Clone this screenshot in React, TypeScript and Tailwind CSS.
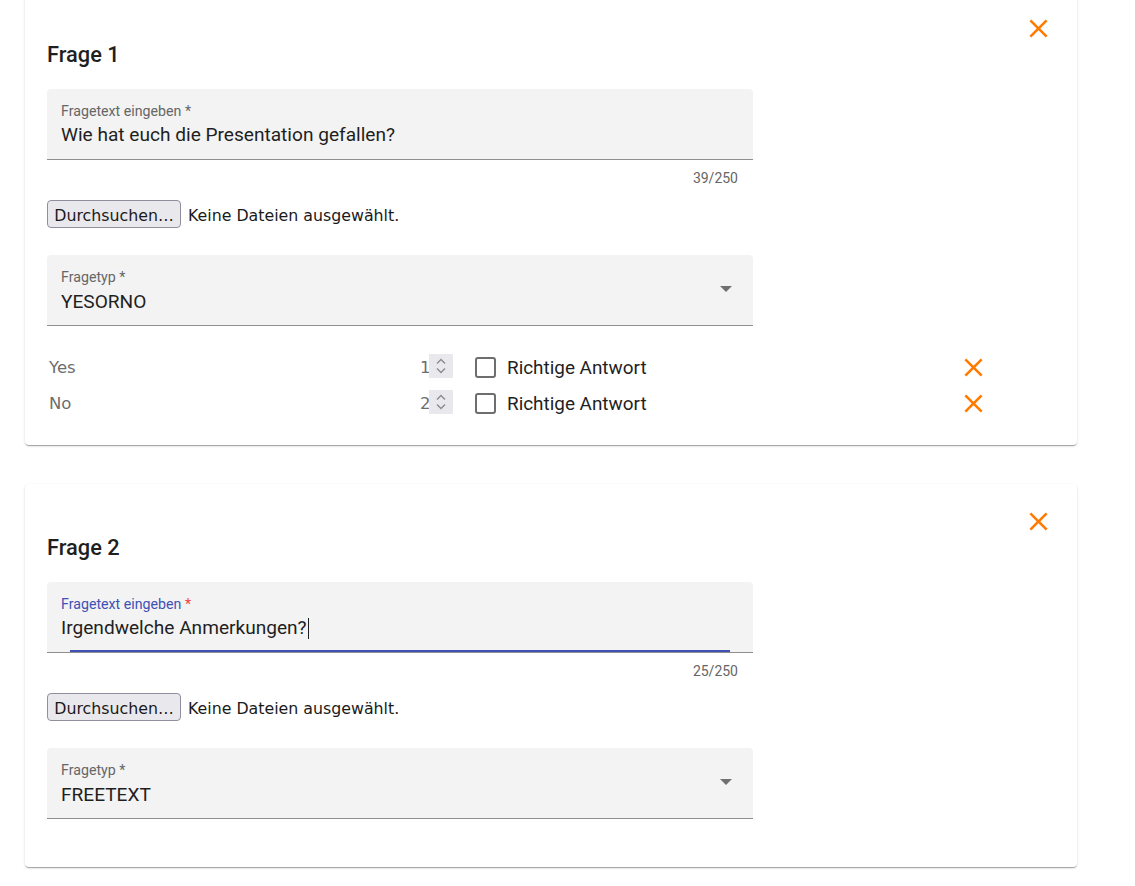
import React from 'react';

const roboto = { fontFamily: 'Roboto, "Liberation Sans", sans-serif' };
const dejavu = { fontFamily: '"DejaVu Sans", "Liberation Sans", sans-serif' };

function CloseIcon({ className = '' }: { className?: string }) {
  return (
    <svg viewBox="0 0 24 24" className={className} fill="#ff7b00">
      <path d="M19 6.41L17.59 5 12 10.59 6.41 5 5 6.41 10.59 12 5 17.59 6.41 19 12 13.41 17.59 19 19 17.59 13.41 12z" />
    </svg>
  );
}

function TextField({ value, count, focused = false }: { value: string; count: string; focused?: boolean }) {
  return (
    <div>
      <div className="relative w-[706px] h-[71px] bg-[#f3f3f3] rounded-t-[4px] border-b border-[#8f8f8f] px-[14px] pt-[14px]">
        <div className="text-[14.2px] leading-[16px]" style={roboto}>
          {focused ? (
            <>
              <span className="text-[#3f51b5]">Fragetext eingeben</span>
              <span className="text-[#f44336]"> *</span>
            </>
          ) : (
            <span className="text-[#666666]">Fragetext eingeben *</span>
          )}
        </div>
        <div className="mt-[5px] flex items-center text-[19.1px] leading-[22px] text-[#1f1f1f]" style={roboto}>
          {value}
          {focused && <span className="ml-[1px] w-px h-[21px] bg-[#1f1f1f]" />}
        </div>
        {focused && <div className="absolute left-[23px] right-[23px] bottom-0 h-[2px] bg-[#3f51b5]" />}
      </div>
      <div className="w-[706px] mt-[8px] pr-[15px] text-right text-[14px] leading-[20px] text-[#666666]" style={roboto}>
        {count}
      </div>
    </div>
  );
}

function FileInput() {
  return (
    <div className="mt-[12px] flex items-center h-[28px] text-[15.8px] text-[#1a1a1a]" style={dejavu}>
      <span className="h-[28px] w-[134px] pt-[3px] flex items-center justify-center bg-[#e9e9ed] border border-[#8f8f9d] rounded-[4px]">
        Durchsuchen…
      </span>
      <span className="ml-[7px] pt-[3px]">Keine Dateien ausgewählt.</span>
    </div>
  );
}

function SelectField({ value }: { value: string }) {
  return (
    <div className="mt-[27px] relative w-[706px] h-[71px] bg-[#f3f3f3] rounded-t-[4px] border-b border-[#8f8f8f] px-[14px] pt-[14px]">
      <div className="text-[14.2px] leading-[16px] text-[#666666]" style={roboto}>
        Fragetyp *
      </div>
      <div className="mt-[6px] text-[19.1px] leading-[22px] text-[#1f1f1f]" style={roboto}>
        {value}
      </div>
      <svg className="absolute right-[21px] top-[31px] w-[12px] h-[6px]" viewBox="0 0 12 6">
        <path d="M0 0h12L6 6z" fill="#707070" />
      </svg>
    </div>
  );
}

function AnswerRow({ label, order }: { label: string; order: number }) {
  return (
    <div className="flex items-center h-[36px] w-[942px]">
      <span className="w-[373px] pl-[2px] pt-[2px] text-[16.5px] text-[#6d6d6d]" style={dejavu}>
        {label}
      </span>
      <span className="w-[9px] pt-[2px] text-right text-[16.5px] text-[#6d6d6d]" style={dejavu}>
        {order}
      </span>
      <span className="w-[24px] h-[24px] bg-[#e9e9ed] flex items-center justify-center -mt-[2px]">
        <svg viewBox="0 0 12 18" className="w-[12px] h-[18px]">
          <path d="M2 6.5 6 2.5 10 6.5" fill="none" stroke="#8c8c8c" strokeWidth="1.4" />
          <path d="M2 11.5 6 15.5 10 11.5" fill="none" stroke="#8c8c8c" strokeWidth="1.4" />
        </svg>
      </span>
      <span className="ml-[22px] w-[21px] h-[21px] border-2 border-[#6e6e6e] rounded-[3px]" />
      <span className="ml-[11px] pt-[2px] text-[18.9px] text-[#1f1f1f]" style={roboto}>
        Richtige Antwort
      </span>
      <CloseIcon className="ml-auto w-[31px] h-[31px]" />
    </div>
  );
}

function QuestionCard({ n, children, pb }: { n: number; children: React.ReactNode; pb: string }) {
  return (
    <div
      className={`relative w-[1052px] bg-white rounded-[4px] px-[22px] pt-[47px] shadow-[0_2px_1px_-1px_rgba(0,0,0,0.2),0_1px_1px_0_rgba(0,0,0,0.14),0_1px_3px_0_rgba(0,0,0,0.12)] ${pb}`}
    >
      <button className="absolute top-[22px] right-[23px] w-[31px] h-[31px]">
        <CloseIcon className="w-[31px] h-[31px]" />
      </button>
      <h2 className="text-[21.8px] leading-[32px] pt-[1px] font-medium text-[#1f1f1f]" style={roboto}>
        Frage {n}
      </h2>
      <div className="mt-[18px]">{children}</div>
    </div>
  );
}

export default function App() {
  return (
    <div className="min-h-screen bg-white overflow-hidden">
      <div className="-mt-[9px] ml-[25px] flex flex-col gap-[39px]">
        <QuestionCard n={1} pb="pb-[24px]">
          <TextField value="Wie hat euch die Presentation gefallen?" count="39/250" />
          <FileInput />
          <SelectField value="YESORNO" />
          <div className="mt-[23px]">
            <AnswerRow label="Yes" order={1} />
            <AnswerRow label="No" order={2} />
          </div>
        </QuestionCard>
        <QuestionCard n={2} pb="pb-[48px]">
          <TextField value="Irgendwelche Anmerkungen?" count="25/250" focused />
          <FileInput />
          <SelectField value="FREETEXT" />
        </QuestionCard>
      </div>
    </div>
  );
}
